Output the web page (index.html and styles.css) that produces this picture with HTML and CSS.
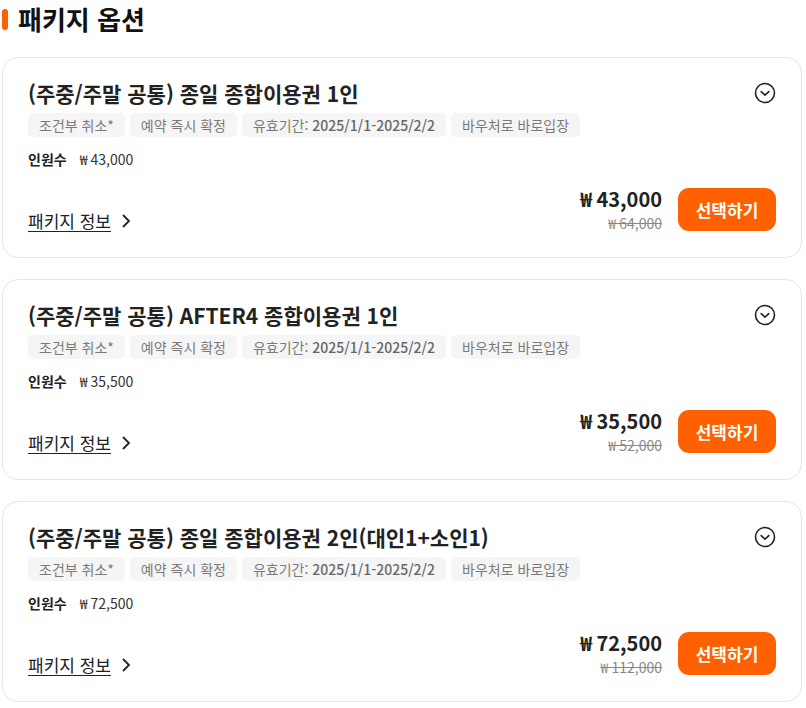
FILE: index.html
```html
<!DOCTYPE html>
<html lang="ko">
<head>
<meta charset="utf-8">
<link rel="stylesheet" href="styles.css">
</head>
<body>
<div class="page">
  <h2 class="section-title"><span class="bar"></span>패키지 옵션</h2>
  <div class="list">
    <div class="card">
      <div class="title-row">
        <div class="title">(주중/주말 공통) 종일 종합이용권 1인</div>
        <svg class="toggle" width="22" height="22" viewBox="0 0 22 22"><circle cx="11" cy="11" r="9.5" fill="none" stroke="#222" stroke-width="1.6"/><path d="M7.2 9.6 L11 13.2 L14.8 9.6" fill="none" stroke="#222" stroke-width="1.6" stroke-linecap="round" stroke-linejoin="round"/></svg>
      </div>
      <div class="tags">
        <span class="tag">조건부 취소*</span>
        <span class="tag">예약 즉시 확정</span>
        <span class="tag">유효기간: <b>2025/1/1-2025/2/2</b></span>
        <span class="tag">바우처로 바로입장</span>
      </div>
      <div class="people"><b>인원수</b><span>₩ 43,000</span></div>
      <div class="bottom">
        <a class="info">패키지 정보</a><svg class="arrow" width="12" height="16" viewBox="0 0 12 16"><path d="M3 2 L9 8 L3 14" fill="none" stroke="#222" stroke-width="1.8" stroke-linejoin="miter"/></svg>
        <div class="price">
          <div class="now">₩ 43,000</div>
          <div class="was">₩ 64,000</div>
        </div>
        <button class="select">선택하기</button>
      </div>
    </div>
    <div class="card">
      <div class="title-row">
        <div class="title">(주중/주말 공통) AFTER4 종합이용권 1인</div>
        <svg class="toggle" width="22" height="22" viewBox="0 0 22 22"><circle cx="11" cy="11" r="9.5" fill="none" stroke="#222" stroke-width="1.6"/><path d="M7.2 9.6 L11 13.2 L14.8 9.6" fill="none" stroke="#222" stroke-width="1.6" stroke-linecap="round" stroke-linejoin="round"/></svg>
      </div>
      <div class="tags">
        <span class="tag">조건부 취소*</span>
        <span class="tag">예약 즉시 확정</span>
        <span class="tag">유효기간: <b>2025/1/1-2025/2/2</b></span>
        <span class="tag">바우처로 바로입장</span>
      </div>
      <div class="people"><b>인원수</b><span>₩ 35,500</span></div>
      <div class="bottom">
        <a class="info">패키지 정보</a><svg class="arrow" width="12" height="16" viewBox="0 0 12 16"><path d="M3 2 L9 8 L3 14" fill="none" stroke="#222" stroke-width="1.8" stroke-linejoin="miter"/></svg>
        <div class="price">
          <div class="now">₩ 35,500</div>
          <div class="was">₩ 52,000</div>
        </div>
        <button class="select">선택하기</button>
      </div>
    </div>
    <div class="card">
      <div class="title-row">
        <div class="title">(주중/주말 공통) 종일 종합이용권 2인(대인1+소인1)</div>
        <svg class="toggle" width="22" height="22" viewBox="0 0 22 22"><circle cx="11" cy="11" r="9.5" fill="none" stroke="#222" stroke-width="1.6"/><path d="M7.2 9.6 L11 13.2 L14.8 9.6" fill="none" stroke="#222" stroke-width="1.6" stroke-linecap="round" stroke-linejoin="round"/></svg>
      </div>
      <div class="tags">
        <span class="tag">조건부 취소*</span>
        <span class="tag">예약 즉시 확정</span>
        <span class="tag">유효기간: <b>2025/1/1-2025/2/2</b></span>
        <span class="tag">바우처로 바로입장</span>
      </div>
      <div class="people"><b>인원수</b><span>₩ 72,500</span></div>
      <div class="bottom">
        <a class="info">패키지 정보</a><svg class="arrow" width="12" height="16" viewBox="0 0 12 16"><path d="M3 2 L9 8 L3 14" fill="none" stroke="#222" stroke-width="1.8" stroke-linejoin="miter"/></svg>
        <div class="price">
          <div class="now">₩ 72,500</div>
          <div class="was">₩ 112,000</div>
        </div>
        <button class="select">선택하기</button>
      </div>
    </div>
  </div>
</div>
</body>
</html>
```
FILE: styles.css
```css
* { box-sizing: border-box; }
html, body { margin: 0; padding: 0; background: #fff; }
body {
  font-family: "Noto Sans CJK KR", "Noto Sans", sans-serif;
  color: #222;
}
.page { padding: 0 4px 0 2px; }
.section-title {
  margin: 0;
  height: 38px;
  padding-top: 0;
  display: flex;
  align-items: center;
  gap: 10px;
  font-size: 26px;
  font-weight: 700;
  line-height: 34px;
  color: #111;
}
.bar {
  width: 6px;
  height: 21px;
  border-radius: 3px;
  background: #ff6000;
}
.list {
  display: flex;
  flex-direction: column;
  gap: 21px;
  margin-top: 19px;
}
.card {
  border: 1px solid #e6e6e6;
  border-radius: 16px;
  padding: 21px 24px 26px 25px;
  display: flex;
  flex-direction: column;
}
.title-row {
  display: flex;
  align-items: center;
  justify-content: space-between;
  height: 28px;
}
.title {
  font-size: 21px;
  font-weight: 700;
  line-height: 28px;
  color: #222;
}
.toggle { margin-right: 1px; }
.tags {
  display: flex;
  gap: 5px;
  margin-top: 6px;
}
.tag {
  background: #f5f5f5;
  color: #7a7a7a;
  font-size: 14px;
  line-height: 24px;
  height: 24px;
  padding: 0 11px;
  border-radius: 5px;
}
.tag b { font-weight: 500; color: #666; }
.people {
  margin-top: 12px;
  font-size: 14px;
  line-height: 20px;
  display: flex;
  gap: 13px;
  color: #222;
}
.people b { font-weight: 700; }
.people span { color: #333; }
.bottom {
  margin-top: 19px;
  display: flex;
  align-items: center;
  height: 43px;
}
.info {
  font-size: 17px;
  line-height: 20px;
  color: #222;
  text-decoration: underline;
  text-underline-offset: 3px;
  margin-top: 22px;
}
.arrow { margin-left: 9px; margin-top: 22px; }
.price {
  margin-left: auto;
  text-align: right;
  margin-right: 16px;
}
.now {
  font-size: 20px;
  font-weight: 700;
  line-height: 24px;
  color: #222;
}
.was {
  margin-top: 3px;
  font-size: 14px;
  line-height: 18px;
  color: #888;
  text-decoration: line-through;
}
.select {
  width: 98px;
  height: 43px;
  border: 0;
  border-radius: 11px;
  background: #ff6000;
  color: #fff;
  font-family: inherit;
  font-size: 17px;
  font-weight: 700;
  margin-right: 1px;
}
```
